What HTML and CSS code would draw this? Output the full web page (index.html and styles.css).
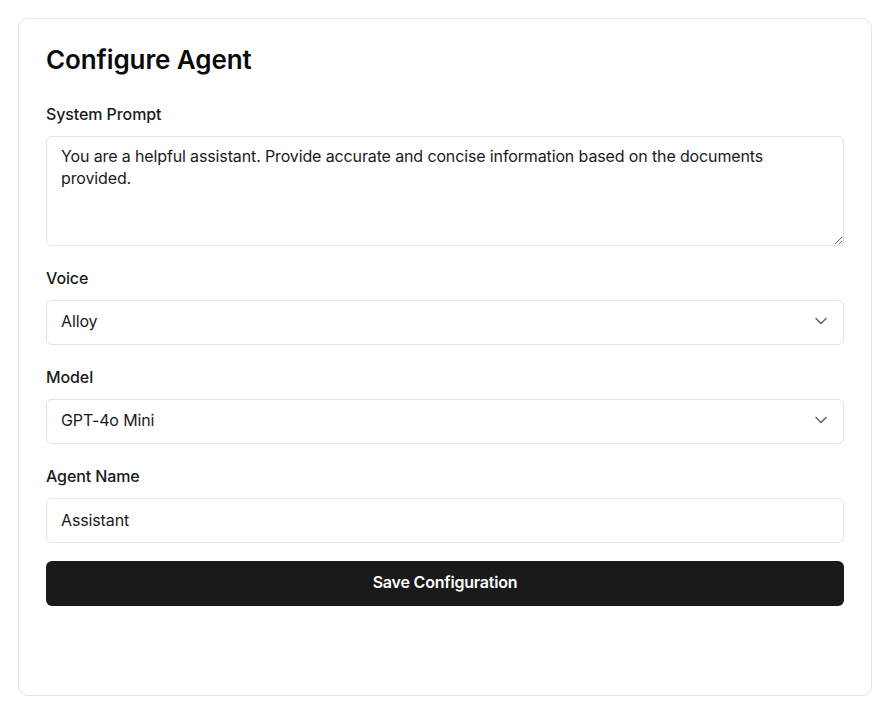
FILE: index.html
```html
<!DOCTYPE html>
<html lang="en">
<head>
<meta charset="utf-8">
<title>Configure Agent</title>
<link rel="stylesheet" href="styles.css">
</head>
<body>
  <main class="card">
    <h1 class="title">Configure Agent</h1>
    <form class="form">
      <div class="field">
        <label class="label" for="prompt">System Prompt</label>
        <textarea id="prompt" class="control textarea">You are a helpful assistant. Provide accurate and concise information based on the documents provided.</textarea>
      </div>
      <div class="field">
        <label class="label" for="voice">Voice</label>
        <div class="select-wrap">
          <select id="voice" class="control select">
            <option>Alloy</option>
          </select>
          <svg class="chevron" width="20" height="20" viewBox="0 0 24 24" fill="none" stroke="currentColor" stroke-width="2" stroke-linecap="round" stroke-linejoin="round"><path d="m6 9 6 6 6-6"/></svg>
        </div>
      </div>
      <div class="field">
        <label class="label" for="model">Model</label>
        <div class="select-wrap">
          <select id="model" class="control select">
            <option>GPT-4o Mini</option>
          </select>
          <svg class="chevron" width="20" height="20" viewBox="0 0 24 24" fill="none" stroke="currentColor" stroke-width="2" stroke-linecap="round" stroke-linejoin="round"><path d="m6 9 6 6 6-6"/></svg>
        </div>
      </div>
      <div class="field">
        <label class="label" for="name">Agent Name</label>
        <input id="name" class="control input" type="text" value="Assistant">
      </div>
      <button type="button" class="button">Save Configuration</button>
    </form>
  </main>
</body>
</html>
```

FILE: styles.css
```css
* {
  box-sizing: border-box;
}

html, body {
  margin: 0;
  background: #ffffff;
}

body {
  padding: 18px 14px 18px 18px;
  font-family: Inter, "Noto Sans", "Liberation Sans", sans-serif;
  color: #1a1a1a;
}

.card {
  min-height: 678px;
  border: 1px solid #e3e3e3;
  border-radius: 10px;
  padding: 25px 27px 27px 27px;
  background: #ffffff;
}

.title {
  margin: 0 0 28px 0;
  font-size: 26px;
  line-height: 32px;
  font-weight: 600;
  color: #0a0a0a;
  letter-spacing: -0.1px;
}

.form {
  display: flex;
  flex-direction: column;
}

.field {
  display: flex;
  flex-direction: column;
  margin-bottom: 22px;
}

.field:nth-last-child(2) {
  margin-bottom: 18px;
}

.label {
  display: block;
  font-size: 16px;
  line-height: 20px;
  font-weight: 500;
  color: #1a1a1a;
  margin-bottom: 12px;
  letter-spacing: -0.1px;
}

.control {
  width: 100%;
  border: 1px solid #e2e2e2;
  border-radius: 6px;
  background: #ffffff;
  font-family: Inter, "Noto Sans", "Liberation Sans", sans-serif;
  font-size: 16px;
  color: #1a1a1a;
  letter-spacing: -0.13px;
  outline: none;
}

.textarea {
  height: 110px;
  padding: 8px 14px;
  line-height: 22px;
  resize: vertical;
  display: block;
}

.select-wrap {
  position: relative;
}

.select {
  height: 45px;
  padding: 0 40px 3px 14px;
  appearance: none;
  -webkit-appearance: none;
  display: block;
}

.chevron {
  position: absolute;
  right: 13px;
  top: 11px;
  color: #6b6b6b;
  pointer-events: none;
}

.input {
  height: 45px;
  padding: 0 14px 1px 14px;
  display: block;
}

.button {
  height: 45px;
  width: 100%;
  padding: 0 0 3px 0;
  border: none;
  border-radius: 6px;
  background: #1a1a1a;
  color: #ffffff;
  font-family: Inter, "Noto Sans", "Liberation Sans", sans-serif;
  font-size: 16px;
  font-weight: 600;
  letter-spacing: -0.2px;
  cursor: pointer;
}
```
